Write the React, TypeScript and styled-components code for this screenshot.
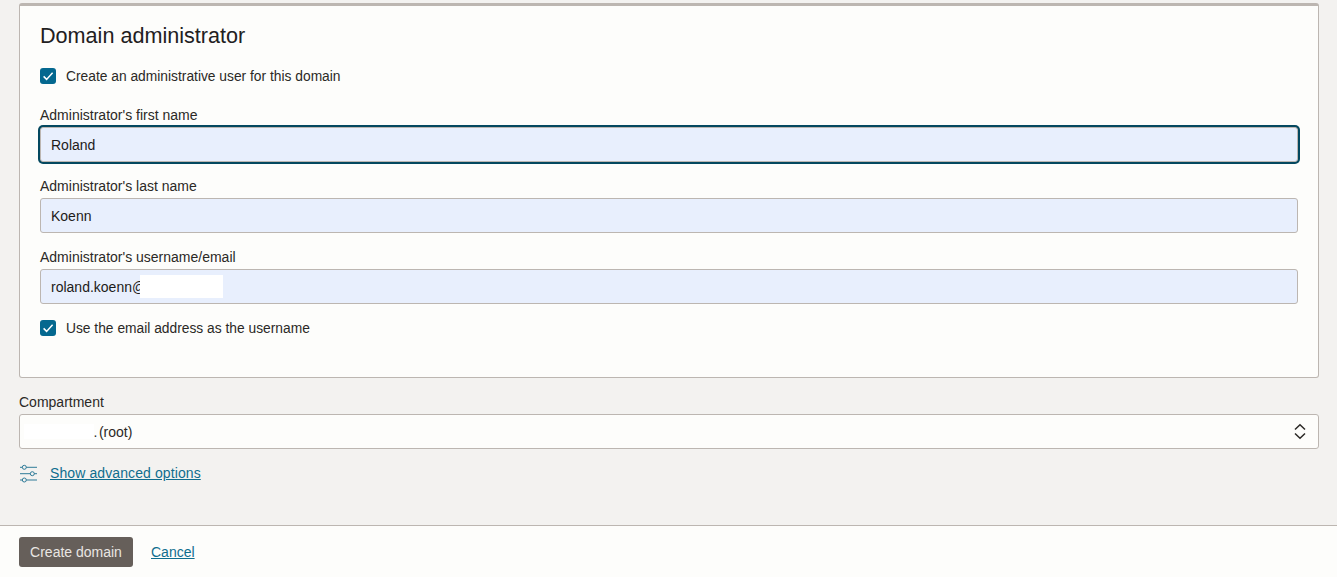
import React, { FC } from 'react'
import styled, { createGlobalStyle } from 'styled-components'

const GlobalStyle = createGlobalStyle`
  html, body {
    margin: 0;
    padding: 0;
    height: 100%;
    background: #f3f2f0;
    overflow: hidden;
  }
  body {
    font-family: "Liberation Sans", Arial, sans-serif;
    font-size: 14px;
    color: #2b2926;
  }
`

const CheckRow: FC<{ label: string; top: number }> = ({ label, top }) => (
  <CheckWrapper top={top}>
    <CheckBox>
      <svg width="12" height="12" viewBox="0 0 12 12" fill="none">
        <path d="M1.6 6.4 L4.6 9.4 L10.6 2.8" stroke="#fff" strokeWidth="1.5" />
      </svg>
    </CheckBox>
    <CheckLabel>{label}</CheckLabel>
  </CheckWrapper>
)

const App: FC = () => {
  return (
    <Page>
      <GlobalStyle />
      <Main>
        <Card>
          <Heading>Domain administrator</Heading>
          <CheckRow label="Create an administrative user for this domain" top={0} />
          <Field>
            <Label>Administrator's first name</Label>
            <TextInput focused>Roland</TextInput>
          </Field>
          <Field>
            <Label>Administrator's last name</Label>
            <TextInput>Koenn</TextInput>
          </Field>
          <Field>
            <Label>Administrator's username/email</Label>
            <TextInput>
              roland.koenn@
              <Redacted />
            </TextInput>
          </Field>
          <CheckRow label="Use the email address as the username" top={16} />
        </Card>

        <Compartment>
          <Label>Compartment</Label>
          <Select>
            <SelectValue>
              <RedactedName />
              <span>.</span>
              <RootText>(root)</RootText>
            </SelectValue>
            <svg width="14" height="18" viewBox="0 0 14 18" fill="none">
              <path d="M2 6.5 L7 1.7 L12 6.5 M2 10.5 L7 15.3 L12 10.5" stroke="#2b2926" strokeWidth="1.5" />
            </svg>
          </Select>
        </Compartment>

        <AdvancedRow>
          <svg width="19" height="19" viewBox="0 0 19 19" fill="none" stroke="#1a6e8e" strokeWidth="0.9">
            <path d="M1 3.3h2.3M7.3 3.3H18M1 9.7h10.3M15.3 9.7H18M1 16h2.3M7.3 16H18" />
            <circle cx="5.3" cy="3.3" r="2" />
            <circle cx="13.3" cy="9.7" r="2" />
            <circle cx="5.3" cy="16" r="2" />
          </svg>
          <AdvancedLink>Show advanced options</AdvancedLink>
        </AdvancedRow>
      </Main>

      <Footer>
        <PrimaryButton>Create domain</PrimaryButton>
        <TextLink>Cancel</TextLink>
      </Footer>
    </Page>
  )
}

export default App

const Page = styled.div`
  width: 1337px;
  height: 577px;
  display: flex;
  flex-direction: column;
`

const Main = styled.main`
  flex: 1;
  padding: 3px 18px 0 19px;
`

const Card = styled.section`
  box-sizing: border-box;
  height: 375px;
  padding: 17px 20px 0;
  background: #fdfdfb;
  border: 1px solid #bcb6b1;
  border-top: 3px solid #bcb6b1;
  border-radius: 3px;
`

const Heading = styled.h2`
  margin: 0 0 19px;
  font-size: 21.6px;
  font-weight: 400;
  line-height: 26px;
  color: #22201e;
`

const CheckWrapper = styled.label<{ top: number }>`
  display: flex;
  align-items: center;
  gap: 10px;
  height: 16px;
  margin-top: ${(p) => p.top}px;
  font-size: 13.8px;
  line-height: 16px;
`

const CheckLabel = styled.span`
  padding-top: 2px;
`

const CheckBox = styled.span`
  width: 16px;
  height: 16px;
  display: flex;
  align-items: center;
  justify-content: center;
  background: #04688f;
  border-radius: 3px;
`

const Field = styled.div`
  margin-top: 24px;

  & + & {
    margin-top: 17px;
  }
`

const Label = styled.div`
  height: 16px;
  line-height: 14px;
  margin-bottom: 3px;
`

const TextInput = styled.div<{ focused?: boolean }>`
  box-sizing: border-box;
  height: 35px;
  padding: 0 10px;
  display: flex;
  align-items: center;
  background: #e8effd;
  border: 1px solid #bcb6b1;
  border-radius: 3px;
  color: #1d1b19;
  box-shadow: ${(p) => (p.focused ? '0 0 0 2px #04485f' : 'none')};
`

const Redacted = styled.span`
  width: 83px;
  height: 23px;
  margin-left: -6px;
  background: #ffffff;
`

const Compartment = styled.div`
  margin-top: 17px;
`

const Select = styled.div`
  box-sizing: border-box;
  height: 35px;
  padding: 0 11px 0 4px;
  display: flex;
  align-items: center;
  justify-content: space-between;
  background: #fdfdfb;
  border: 1px solid #bcb6b1;
  border-radius: 3px;
`

const SelectValue = styled.div`
  display: flex;
  align-items: center;
`

const RedactedName = styled.span`
  width: 69.5px;
  height: 15px;
  background: #ffffff;
`

const RootText = styled.span`
  margin-left: 1.5px;
`

const AdvancedRow = styled.div`
  display: flex;
  align-items: center;
  gap: 12px;
  margin-top: 15px;
  height: 19px;
`

const TextLink = styled.a`
  color: #0f6d8e;
  text-decoration: underline;
  cursor: pointer;
`

const AdvancedLink = styled(TextLink)`
  margin-bottom: 2px;
  letter-spacing: 0.1px;
`

const Footer = styled.footer`
  box-sizing: border-box;
  height: 52px;
  padding: 11px 19px 0;
  display: flex;
  align-items: flex-start;
  gap: 18px;
  background: #fdfdfb;
  border-top: 1px solid #bcb6b1;

  ${TextLink} {
    line-height: 30px;
  }
`

const PrimaryButton = styled.button`
  width: 114px;
  height: 30px;
  padding: 0;
  background: #665f5a;
  border: none;
  border-radius: 3px;
  color: #e9e6e3;
  font: inherit;
`
